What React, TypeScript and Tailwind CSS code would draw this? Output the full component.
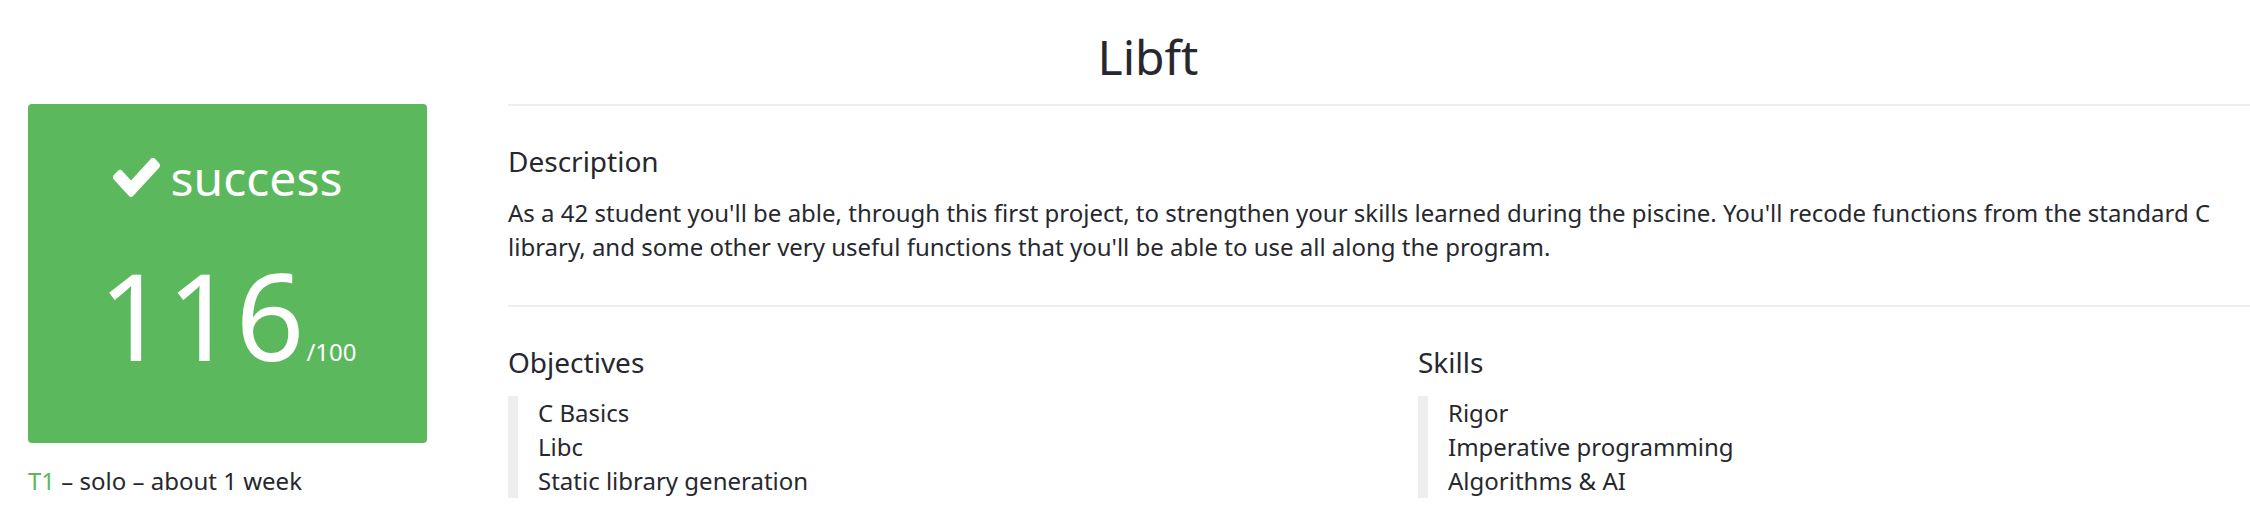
const objectives = ["C Basics", "Libc", "Static library generation"];
const skills = ["Rigor", "Imperative programming", "Algorithms & AI"];

export default function App() {
  return (
    <div className="w-full min-h-[516px] bg-white text-[#27282f] font-['Noto_Sans',sans-serif] overflow-hidden">
      <Header />
      <div className="flex pl-[28px]">
        <ScoreColumn />
        <Details />
      </div>
    </div>
  );
}

const Header = () => {
  return (
    <div className="pl-[46px] pt-[30px] pb-[21px] text-center">
      <h1 className="text-[48px] leading-[53px] font-normal">Libft</h1>
    </div>
  );
};

const CheckIcon = () => {
  return (
    <svg
      viewBox="121 342 1550 1180"
      preserveAspectRatio="none"
      className="w-[47px] h-[39px] fill-white shrink-0"
    >
      <path d="M1671 566q0 40-28 68l-724 724-136 136q-28 28-68 28t-68-28l-136-136-362-362q-28-28-28-68t28-68l136-136q28-28 68-28t68 28l294 295 656-657q28-28 68-28t68 28l136 136q28 28 28 68z" />
    </svg>
  );
};

const ScoreColumn = () => {
  return (
    <div className="w-[399px] shrink-0">
      <div className="h-[339px] rounded-[4px] bg-[#5cb85c] text-white flex flex-col items-center pt-[47px]">
        <div className="flex items-center gap-[11px] h-[53px]">
          <CheckIcon />
          <span className="text-[48px] leading-[53px]">success</span>
        </div>
        <div className="mt-[51px] flex items-baseline">
          <span className="text-[120px] leading-[120px]">116</span>
          <span className="text-[24px] leading-[24px] ml-[2px]">/100</span>
        </div>
      </div>
      <p className="mt-[21px] text-[24px] leading-[33px]">
        <span className="text-[#5cb85c]">T1</span> – solo – about 1 week
      </p>
    </div>
  );
};

const Details = () => {
  return (
    <div className="flex-1 ml-[81px]">
      <section className="border-t-2 border-[#eeeeee] pt-[37px] pb-[41px]">
        <h4 className="text-[28px] leading-[36px]">Description</h4>
        <p className="mt-[17px] text-[24px] leading-[34px]">
          As a 42 student you'll be able, through this first project, to
          strengthen your skills learned during the piscine. You'll recode
          functions from the standard C library, and some other very useful
          functions that you'll be able to use all along the program.
        </p>
      </section>
      <section className="border-t-2 border-[#eeeeee] pt-[37px] flex">
        <ItemList title="Objectives" items={objectives} width="w-[910px]" />
        <ItemList title="Skills" items={skills} width="flex-1" />
      </section>
    </div>
  );
};

const ItemList = ({
  title,
  items,
  width,
}: {
  title: string;
  items: string[];
  width: string;
}) => {
  return (
    <div className={width}>
      <h4 className="text-[28px] leading-[36px]">{title}</h4>
      <ul className="mt-[16px] border-l-[10px] border-[#eeeeee] pl-[20px]">
        {items.map((item) => (
          <li key={item} className="text-[24px] leading-[34px]">
            {item}
          </li>
        ))}
      </ul>
    </div>
  );
};
